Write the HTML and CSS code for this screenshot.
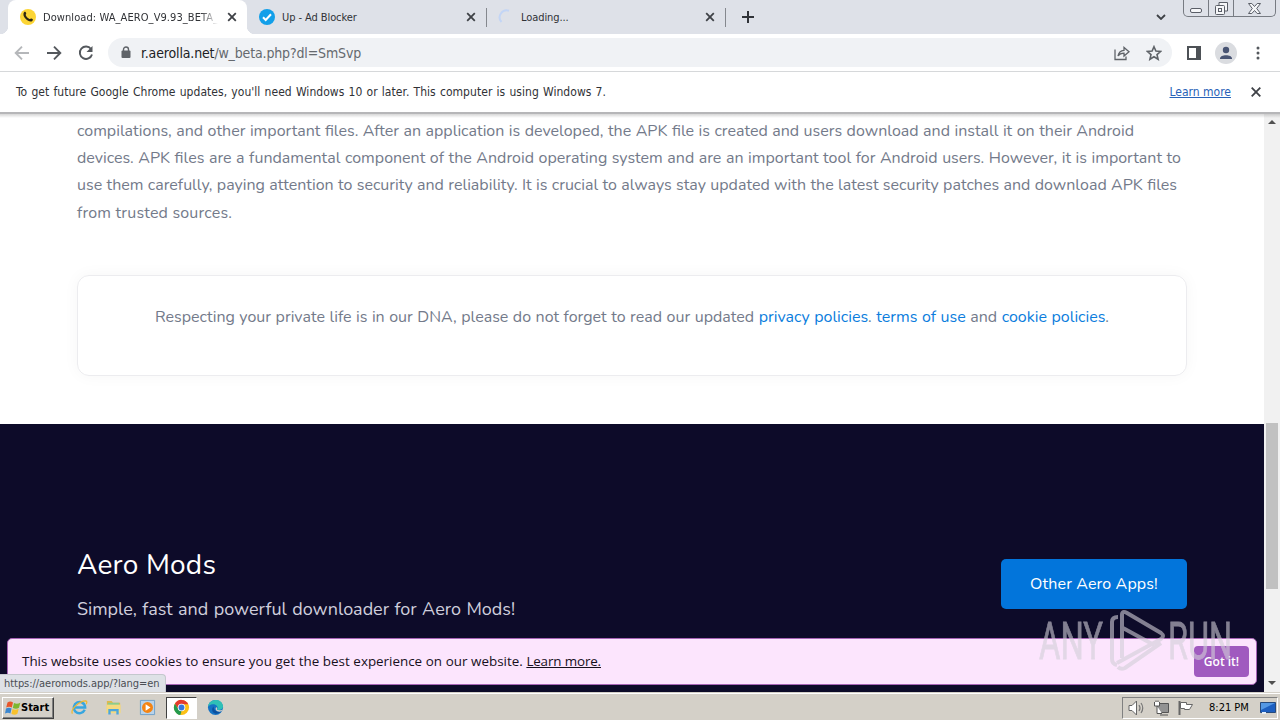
FILE: index.html
```html
<!DOCTYPE html>
<html lang="en">
  <head>
    <meta charset="UTF-8" />
    <meta name="viewport" content="width=device-width, initial-scale=1.0" />
    <title>Download: WA_AERO_V9.93_BETA</title>
    <link rel="stylesheet" href="styles.css">
  </head>
  <body>
    <div class="tabs">
      <div class="tab active">
        <svg class="favicon" viewBox="0 0 16 16"><circle cx="8" cy="8" r="8" fill="#fcd535"/><path d="M4 3.2c1-1 1.8-.4 2.2 1 .3 1-.8 1.100-.4 2 .8 1.700 2 3 3.700 3.800.9.400 1.100-.7 2-.4 1.700.5 1.900 1.300.8 2.300-1.500 1.300-4.500.2-6.500-1.900C3.500 7.800 2.700 4.700 4 3.200z" fill="#2d2713"/></svg>
        <span class="title fade">Download: WA_AERO_V9.93_BETA_</span>
        <svg class="close" viewBox="0 0 10 10"><path d="M1.200 1.200l7.600 7.600M8.800 1.200L1.200 8.800"/></svg>
      </div>
      <div class="tab">
        <svg class="favicon" viewBox="0 0 16 16"><circle cx="8" cy="8" r="8" fill="#129fe9"/><path d="M4 8.300l2.700 2.700L12 5.300" fill="none" stroke="#fff" stroke-width="2"/></svg>
        <span class="title">Up - Ad Blocker</span>
        <svg class="close" viewBox="0 0 10 10"><path d="M1.200 1.200l7.600 7.600M8.800 1.200L1.200 8.800"/></svg>
      </div>
      <div class="tab last">
        <svg class="favicon" viewBox="0 0 16 16"><path d="M11 1.700A7 7 0 0 0 3.500 13" fill="none" stroke="#c3d5f5" stroke-width="2"/></svg>
        <span class="title">Loading...</span>
        <svg class="close" viewBox="0 0 10 10"><path d="M1.200 1.200l7.600 7.600M8.800 1.200L1.200 8.800"/></svg>
      </div>
      <svg class="plus" viewBox="0 0 12 12"><path d="M6 0v12M0 6h12"/></svg>
      <svg class="chevron" viewBox="0 0 10 6"><path d="M1 1l4 4 4-4"/></svg>
      <div class="winbtns">
        <span class="min"><svg width="13" height="5"><rect x=".5" y=".5" width="11" height="4" rx="1.500"/></svg></span>
        <span class="max"><svg width="13" height="13"><path d="M4 3V.5h8.500V9H10"/><rect x=".5" y="3.500" width="9" height="9" rx="1"/><rect x="3.500" y="6.500" width="3" height="3"/></svg></span>
        <span class="quit"><svg width="13" height="11"><path d="M.5.5h3.300l2.700 3 2.700-3h3.300L8.700 5.500l3.800 5H9.200l-2.700-3-2.700 3H.5l3.800-5z"/></svg></span>
      </div>
    </div>

    <div class="toolbar">
      <svg class="nav off" viewBox="0 0 16 16"><path d="M15 8H2M8 1.700L1.700 8 8 14.300"/></svg>
      <svg class="nav" viewBox="0 0 16 16"><path d="M1 8h13M8 1.700L14.300 8 8 14.300"/></svg>
      <svg class="nav reload" viewBox="0 0 16 16"><path d="M13 4A6.200 6.200 0 1 0 14 9.500"/><path d="M14.500 1v6h-6z" class="solid"/></svg>
      <div class="omnibox">
        <svg class="lock" viewBox="0 0 10 13"><path d="M2.500 5V3.500a2.500 2.500 0 0 1 5 0V5" fill="none" stroke="#5f6368" stroke-width="1.400"/><rect x=".5" y="4.600" width="9" height="7.400" rx="1" fill="#5f6368"/></svg>
        <span class="url"><b>r.aerolla.net</b>/w_beta.php?dl=SmSvp</span>
        <svg class="share" viewBox="0 0 16 16"><path d="M1 4.500v10h11v-3M4 11c.6-3.700 2.500-5.500 6-5.700V2.500L15 6.800 10 11V8.200C7 8.200 5.300 9 4 11z"/></svg>
        <svg class="star" viewBox="0 0 16 16"><path d="M8 1.700l1.900 4.400 4.700.4L11 9.600l1.100 4.600L8 11.700l-4.100 2.500L5 9.600 1.400 6.500l4.700-.4z"/></svg>
      </div>
      <svg class="panel" viewBox="0 0 14 14"><path d="M1 1h12v12H1z" fill="none" stroke="#4d5156" stroke-width="2"/><path d="M9 0h5v14H9z" fill="#4d5156"/></svg>
      <svg class="avatar" viewBox="0 0 22 22"><circle cx="11" cy="11" r="11" fill="#dadce0"/><circle cx="11" cy="8" r="3.200" fill="#475372"/><path d="M5 16.500c0-4.500 12-4.500 12 0v.5H5z" fill="#475372"/></svg>
      <svg class="dots" viewBox="0 0 4 14"><circle cx="2" cy="2" r="1.500"/><circle cx="2" cy="7" r="1.500"/><circle cx="2" cy="12" r="1.500"/></svg>
    </div>

    <div class="infobar">
      <span class="msg">To get future Google Chrome updates, you'll need Windows 10 or later. This computer is using Windows 7.</span>
      <a href="#">Learn more</a>
      <svg class="close" viewBox="0 0 10 10"><path d="M.7.7l8.600 8.600M9.300.7L.7 9.300"/></svg>
    </div>

    <div class="viewport">
      <div class="page">
        <div class="article">
          <p class="line one">compilations, and other important files. After an application is developed, the APK file is created and users download and install it on their Android</p>
          <p class="line two">devices. APK files are a fundamental component of the Android operating system and are an important tool for Android users. However, it is important to</p>
          <p class="line three">use them carefully, paying attention to security and reliability. It is crucial to always stay updated with the latest security patches and download APK files</p>
          <p class="line four">from trusted sources.</p>
          <div class="card">
            <p class="line policy">Respecting your private life is in our DNA, please do not forget to read our updated <a href="#">privacy policies</a>. <a href="#">terms of use</a> and <a href="#">cookie policies</a>.</p>
          </div>
        </div>
        <div class="footer">
          <div>
            <h3>Aero Mods</h3>
            <p class="slogan">Simple, fast and powerful downloader for Aero Mods!</p>
          </div>
          <a class="btn" href="#">Other Aero Apps!</a>
        </div>
        <div class="cookie">
          <span class="notice">This website uses cookies to ensure you get the best experience on our website. <a href="#">Learn more.</a></span>
          <a class="gotit" href="#">Got it!</a>
        </div>
        <div class="status">https://aeromods.app/?lang=en</div>
      </div>
      <div class="scrollbar">
        <i class="up"></i>
        <i class="thumb"></i>
        <i class="down"></i>
      </div>
      <svg class="watermark" viewBox="0 0 200 66">
        <g class="letters">
          <text x="3" y="51" textLength="64" lengthAdjust="spacingAndGlyphs">ANY</text>
          <text x="132" y="51" textLength="64" lengthAdjust="spacingAndGlyphs">RUN</text>
        </g>
        <path d="M82 9q-6 0-6 5v37q0 5 5 6M86 50V7q0-5 5-2l34 20q4 3 0 6L81 55M87 20l31 17M125 35L89 60q-4 2-7-1" />
      </svg>
    </div>

    <div class="taskbar">
      <div class="start">
        <svg viewBox="0 0 16 16"><path d="M2.500 2.500C4.500 1 6.500 1.500 8 2.500L6.800 7.500C5 6.500 3 6.600 1.200 7.500z" fill="#e8562a"/><path d="M9 3c2 1 4 1 6.300-.3L14 7.700c-2 1.300-4 1.100-6.200.2z" fill="#7db72f"/><path d="M1 8.500c2-1 4-.9 5.600 0L5.400 13.500C4 12.500 2 12.500 0 13.500z" fill="#3b87d0"/><path d="M7.500 9c2 1 4 1 6.200-.2l-1.300 5c-2 1.200-4 1.100-6 0z" fill="#f8c12c"/></svg>
        <span>Start</span>
      </div>
      <div class="quick">
        <span><svg viewBox="0 0 18 18"><path d="M14.500 11.500A6 6 0 1 1 15 9H4" fill="none" stroke="#37a6df" stroke-width="2.600"/><path d="M1.500 15.500C-1 11 9 2 15.500 2c2 .3 1.200 2.300.5 3.500" fill="none" stroke="#efb82f" stroke-width="1.300"/></svg></span>
        <span><svg viewBox="0 0 18 18"><path d="M2 2h5l1.500 2H16v10H2z" fill="#e0b94c"/><path d="M3 4h12v3H3z" fill="#8ccc8c"/><path d="M1.500 6h15v9h-15z" fill="#f5da80"/><path d="M3.500 16.500v-6h11v6H12v-3.500H6v3.500z" fill="#4da6dc"/></svg></span>
        <span><svg viewBox="0 0 18 18"><path d="M1.500 1.500h15v15h-15z" fill="#b9d3ea" stroke="#6f9fc8"/><circle cx="9" cy="9" r="5.800" fill="#f48413"/><path d="M7 5.500l5.200 3.500L7 12.500z" fill="#fff"/></svg></span>
        <span class="open"><svg viewBox="0 0 18 18"><circle cx="9" cy="9" r="8" fill="#fbc016"/><path d="M2 5a8 8 0 0 1 14.200.5H9L6 11z" fill="#e33b2e"/><path d="M2 5l4 6 3 2-1.200 4A8 8 0 0 1 2 5z" fill="#249a4d"/><circle cx="9" cy="9" r="4" fill="#fff"/><circle cx="9" cy="9" r="3.100" fill="#3577dc"/></svg></span>
        <span><svg viewBox="0 0 18 18"><circle cx="9" cy="9" r="8" fill="#1572c4"/><path d="M1 8C2 2 7 1 10 1c5 .5 7 4 7 7 0 3-3 4-6.500 3.500C13 8 9 5 6 5.500 3.500 5.700 2 7 1 8z" fill="#2fc0b6"/><path d="M7 8c0 5 4 6 8 5.300-4 4-9 2-9.500-1.500C5.400 10 6 9 7 8z" fill="#0c4f9e"/><path d="M10 8.500q1.500 1.500.5 3 3 1 6.500-.5-1 2-3.500 2.500c-4 0-5.500-3-3.500-5z" fill="#d4d0c8"/></svg></span>
      </div>
      <div class="tray">
        <svg width="18" height="16" viewBox="0 0 18 16"><path d="M1 5.500h3L8.500 1v14L4 10.500H1z" fill="#fff" stroke="#666"/><path d="M11 5q2 3 0 6M13 3q3.500 5 0 10" fill="none" stroke="#777" stroke-width="1.200"/></svg>
        <svg width="17" height="16" viewBox="0 0 17 16"><path d="M4.500 3.500h11v9h-11zM7 15h8" fill="#929292" stroke="#555" /><path d="M1.500 2v4h5V2M3 2V.5M5 2V.5M4 6v7.500h5" fill="#fff" stroke="#555"/></svg>
        <svg width="17" height="16" viewBox="0 0 17 16"><path d="M2.500 1v14" stroke="#666" stroke-width="2"/><path d="M3.500 2.500h6v2h6l-3 5h-5v-1h-4z" fill="#fff" stroke="#666"/></svg>
        <span class="clock">8:21 PM</span>
        <svg width="16" height="14" viewBox="0 0 16 14"><path d="M.5 1.500h15v10H.5z" fill="#1d5fc0" stroke="#264a7c"/><path d="M1 2h14L1 9z" fill="#5498e4"/><path d="M2 12h4" stroke="#e3edf7" stroke-width="2"/></svg>
      </div>
    </div>
  </body>
</html>
```

FILE: styles.css
```css
* {
  margin: 0;
  padding: 0;
  box-sizing: border-box;
}
body {
  width: 1280px;
  height: 720px;
  overflow: hidden;
  display: flex;
  flex-direction: column;
  font-family: "DejaVu Sans Condensed", "Noto Sans", sans-serif;
  font-size: 11px;
  color: #303236;
  background-color: #fff;
}
a {
  text-decoration: none;
}
svg {
  display: block;
  flex: none;
}

/* tabs */
.tabs {
  height: 34px;
  flex: none;
  display: flex;
  align-items: center;
  background-color: #dee1e8;
  padding-left: 8px;
}
.tab {
  width: 239px;
  height: 34px;
  display: flex;
  align-items: center;
  padding: 0 10px 0 12px;
  position: relative;
}
.tab.active {
  background-color: #fff;
  border-radius: 8px 8px 0 0;
}
.tab.active::before,
.tab.active::after {
  content: "";
  position: absolute;
  bottom: 0;
  left: -8px;
  width: 8px;
  height: 8px;
  background: radial-gradient(circle at 0 0, #dee1e8 8px, #fff 8.5px);
}
.tab.active::after {
  left: auto;
  right: -8px;
  background: radial-gradient(circle at 100% 0, #dee1e8 8px, #fff 8.5px);
}
.tab:not(.active)::after {
  content: "";
  position: absolute;
  right: -1px;
  top: 8px;
  width: 1px;
  height: 19px;
  background-color: #85888e;
}
.favicon {
  width: 16px;
  height: 16px;
}
.title {
  flex: 1;
  margin-left: 7px;
  letter-spacing: -0.08px;
  white-space: nowrap;
  overflow: hidden;
}
.fade {
  letter-spacing: 0.08px;
  -webkit-mask-image: linear-gradient(90deg, #000 90%, transparent);
  mask-image: linear-gradient(90deg, #000 90%, transparent);
}
.close {
  width: 10px;
  height: 10px;
  margin-left: 9px;
  fill: none;
  stroke: #3e4146;
  stroke-width: 1.8;
}
.plus {
  width: 12px;
  height: 12px;
  margin-left: 17px;
  stroke: #303338;
  stroke-width: 2;
}
.chevron {
  width: 10px;
  height: 6px;
  margin-left: auto;
  margin-right: 17px;
  fill: none;
  stroke: #3e4146;
  stroke-width: 1.8;
}
.winbtns {
  align-self: flex-start;
  display: flex;
  width: 93px;
  height: 17px;
  margin-right: 4px;
  border: 1px solid #777b82;
  border-top: 0;
  border-radius: 0 0 5px 5px;
}
.winbtns span {
  display: flex;
  justify-content: center;
  align-items: center;
  border-right: 1px solid #777b82;
}
.winbtns svg {
  fill: #f5f6f8;
  stroke: #5a5e67;
}
.winbtns .min {
  width: 25px;
  padding-top: 4px;
}
.winbtns .max {
  width: 25px;
}
.winbtns .quit {
  flex: 1;
  border: 0;
}

/* toolbar */
.toolbar {
  height: 38px;
  flex: none;
  display: flex;
  align-items: center;
  padding: 0 20px 0 14px;
  border-bottom: 1px solid #d6d8da;
}
.nav {
  width: 16px;
  height: 16px;
  margin-right: 16px;
  fill: none;
  stroke: #54585d;
  stroke-width: 1.9;
}
.nav.off {
  stroke: #b5b7ba;
}
.nav.reload {
  margin-right: 14px;
}
.nav .solid {
  fill: #54585d;
  stroke: none;
}
.omnibox {
  flex: 1;
  height: 29px;
  display: flex;
  align-items: center;
  border-radius: 15px;
  background-color: #f0f2f5;
  padding: 0 10px 0 13px;
}
.lock {
  width: 10px;
  height: 13px;
}
.url {
  flex: 1;
  margin-left: 10px;
  font-size: 14px;
  letter-spacing: -0.15px;
  color: #65696e;
}
.url b {
  font-weight: normal;
  color: #202124;
}
.share,
.star {
  width: 16px;
  height: 16px;
  fill: none;
  stroke: #5f6368;
  stroke-width: 1.3;
}
.star {
  margin-left: 16px;
  stroke-width: 1.6;
}
.panel {
  width: 14px;
  height: 14px;
  margin-left: 15px;
}
.avatar {
  width: 22px;
  height: 22px;
  margin-left: 14px;
}
.dots {
  width: 4px;
  height: 14px;
  margin-left: 19px;
  fill: #54585d;
}

/* update notice */
.infobar {
  height: 42px;
  flex: none;
  display: flex;
  align-items: center;
  padding: 0 19px 1px 16px;
  border-bottom: 2px solid #b6b6b8;
  font-size: 12px;
}
.infobar .msg {
  width: 590px;
  letter-spacing: 0.05px;
  white-space: nowrap;
  text-align-last: justify;
}
.infobar a {
  margin-left: auto;
  color: #2862b8;
  text-decoration: underline;
}
.infobar .close {
  margin-left: 20px;
}

/* page */
.viewport {
  flex: 1;
  min-height: 0;
  display: flex;
  position: relative;
}
.viewport::before {
  content: "";
  position: absolute;
  z-index: 1;
  left: 0;
  right: 0;
  top: 0;
  height: 4px;
  background: linear-gradient(rgba(0, 0, 0, 0.16), transparent);
}
.page {
  width: 1264px;
  position: relative;
  display: flex;
  flex-direction: column;
  font-family: Nunito, "Open Sans", sans-serif;
}
.article {
  height: 310px;
  flex: none;
  padding: 4px 77px 0;
}
.line {
  font-size: 16px;
  line-height: 27.2px;
  color: #737a8a;
  white-space: nowrap;
  text-align-last: justify;
}
.line a {
  color: #0b7ddd;
}
.one {
  width: 1057px;
}
.two {
  width: 1104px;
}
.three {
  width: 1100px;
}
.four {
  width: 155px;
  letter-spacing: 0.17px;
}
.card {
  width: 1110px;
  height: 101px;
  margin-top: 48.5px;
  padding: 28px 77px;
  border: 1px solid #ececef;
  border-radius: 12px;
  box-shadow: 0 0 16px rgba(0, 0, 0, 0.04);
}
.policy {
  width: 954px;
}
.footer {
  flex: 1;
  display: flex;
  justify-content: space-between;
  align-items: flex-start;
  padding: 120px 77px 0;
  background-color: #0d0b29;
  color: #fff;
}
.footer h3 {
  padding-top: 1px;
  font-size: 28px;
  font-weight: normal;
  letter-spacing: 0.22px;
  line-height: 41px;
}
.slogan {
  width: 438px;
  margin-top: 9px;
  font-size: 18px;
  letter-spacing: -0.02px;
  line-height: 28px;
  color: #d0cfdd;
  white-space: nowrap;
  text-align-last: justify;
}
.btn {
  width: 186px;
  height: 50px;
  margin-top: 15px;
  border-radius: 5px;
  background-color: #0275db;
  color: #fff;
  font-size: 16px;
  letter-spacing: 0.12px;
  line-height: 51px;
  text-align: center;
}
.cookie {
  position: absolute;
  left: 7px;
  right: 7px;
  bottom: 7px;
  height: 47px;
  display: flex;
  align-items: center;
  justify-content: space-between;
  padding: 0 7px 0 14px;
  border: 1px solid #a865b7;
  border-radius: 5px;
  background-color: #fce5fd;
  color: #17101c;
  font-family: "Open Sans", sans-serif;
  font-size: 13.4px;
}
.notice {
  width: 579px;
  margin-top: -2px;
  white-space: nowrap;
  text-align-last: justify;
}
.cookie .notice a {
  letter-spacing: -0.15px;
  color: #17101c;
  text-decoration: underline;
}
.gotit {
  width: 55px;
  height: 31px;
  border-radius: 4px;
  background-color: #a05abf;
  color: #fff;
  font-size: 12px;
  font-weight: 600;
  line-height: 31px;
  text-align: center;
}
.status {
  position: absolute;
  left: 0;
  bottom: 0;
  width: 166px;
  height: 18px;
  padding-left: 4px;
  border: 1px solid #c4c7cd;
  border-width: 1px 1px 0 0;
  border-radius: 0 4px 0 0;
  background-color: #dee1e6;
  color: #4b4e54;
  font-family: "DejaVu Sans Condensed", sans-serif;
  font-size: 11px;
  letter-spacing: -0.05px;
  line-height: 17px;
}
.scrollbar {
  width: 16px;
  position: relative;
  background-color: #f1f1f1;
}
.scrollbar i {
  position: absolute;
  left: 4px;
  border: 4px solid transparent;
}
.scrollbar .up {
  top: 2px;
  border-bottom-color: #505050;
}
.scrollbar .down {
  bottom: 3px;
  border-top-color: #505050;
}
.scrollbar .thumb {
  left: 2px;
  top: 309px;
  width: 12px;
  height: 166px;
  border: 0;
  background-color: #c1c1c1;
}
.watermark {
  position: absolute;
  left: 1036px;
  top: 494px;
  width: 200px;
  height: 66px;
  overflow: visible;
  opacity: 0.6;
  fill: none;
  stroke: #d2cfd8;
  stroke-width: 4;
}
.letters {
  font-family: Roboto, sans-serif;
  font-size: 51px;
  fill: #d2cfd8;
  stroke-width: 0.8;
}

/* taskbar */
.taskbar {
  height: 28px;
  flex: none;
  display: flex;
  align-items: center;
  padding: 2px 2px 0;
  border-top: 1px solid #d4d0c8;
  box-shadow: inset 0 1px #fff;
  background-color: #d4d0c8;
  color: #000;
}
.start {
  width: 52px;
  height: 22px;
  display: flex;
  align-items: center;
  padding-left: 2px;
  border: 1px solid;
  border-color: #fff #404040 #404040 #fff;
  box-shadow: inset -1px -1px #808080;
  font-weight: bold;
}
.start svg {
  width: 16px;
  height: 16px;
}
.quick {
  display: flex;
  margin-left: 10px;
  gap: 3px;
}
.quick span {
  width: 31px;
  height: 22px;
  display: flex;
  align-items: center;
  justify-content: center;
}
.quick svg {
  width: 17px;
  height: 17px;
}
.quick .open {
  border: 1px solid;
  border-color: #404040 #fff #fff #404040;
  background-color: #fff;
}
.tray {
  width: 156px;
  height: 22px;
  margin-left: auto;
  display: flex;
  align-items: center;
  padding-left: 5px;
  gap: 7px;
  border: 1px solid;
  border-color: #808080 #fff #fff #808080;
}
.clock {
  width: 41px;
  margin-left: 8px;
  margin-right: 3px;
  white-space: nowrap;
}
```
